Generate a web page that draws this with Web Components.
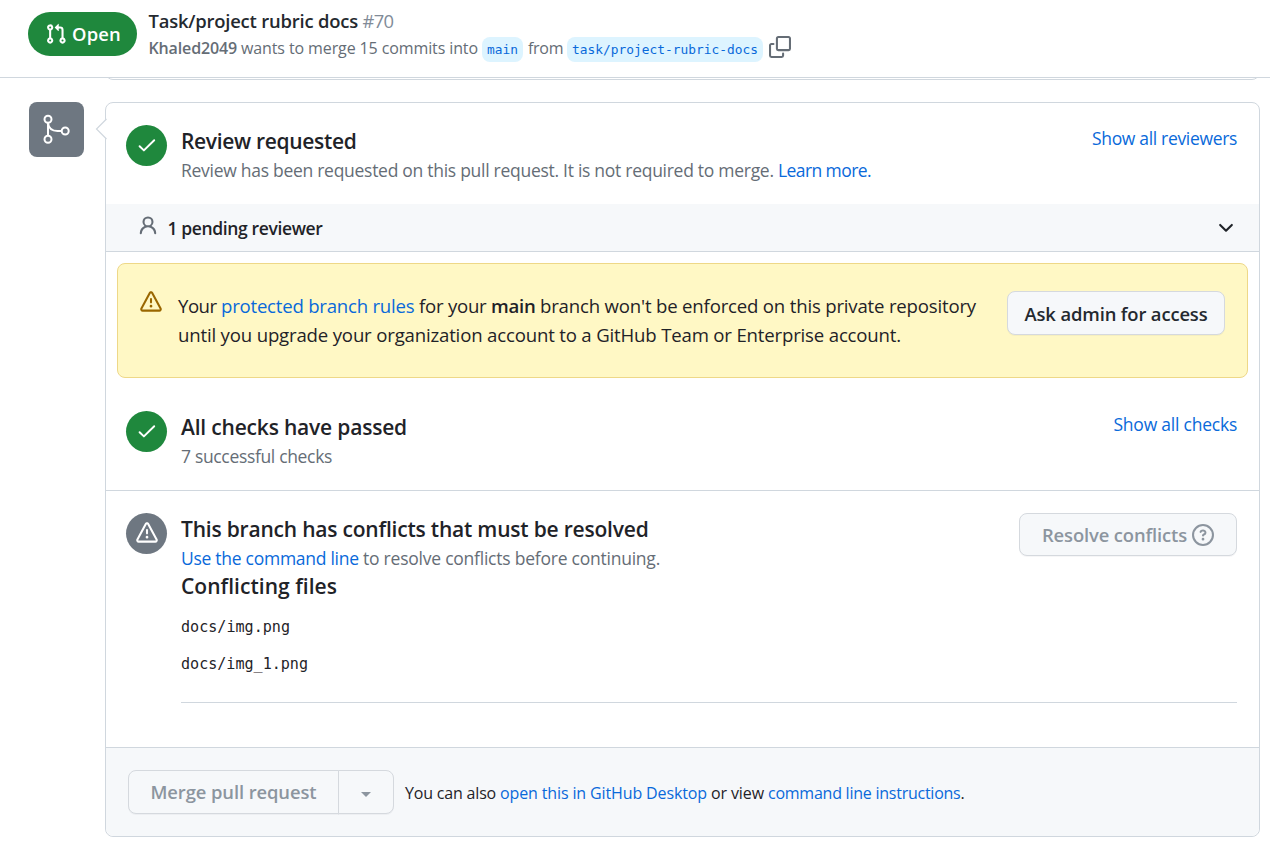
<!DOCTYPE html>
<html lang="en">
<head>
<meta charset="utf-8">
<title>Task/project rubric docs #70</title>
<style>
  body { margin: 0; background: #fff; color: #1f2328; font-family: "Open Sans", "Noto Sans", sans-serif; }
</style>
</head>
<body>
<pr-page></pr-page>
<script>
const ICONS = {
  pr: ['0 0 16 16', '<path d="M1.5 3.25a2.25 2.25 0 1 1 3 2.122v5.256a2.251 2.251 0 1 1-1.5 0V5.372A2.25 2.25 0 0 1 1.5 3.25Zm5.677-.177L9.573.677A.25.25 0 0 1 10 .854V2.5h1A2.5 2.5 0 0 1 13.5 5v5.628a2.251 2.251 0 1 1-1.5 0V5a1 1 0 0 0-1-1h-1v1.646a.25.25 0 0 1-.427.177L7.177 3.427a.25.25 0 0 1 0-.354ZM3.75 2.5a.75.75 0 1 0 0 1.5.75.75 0 0 0 0-1.5Zm0 9.5a.75.75 0 1 0 0 1.5.75.75 0 0 0 0-1.5Zm8.25.75a.75.75 0 1 0 1.5 0 .75.75 0 0 0-1.5 0Z"/>'],
  merge: ['0 0 55 55', '<g fill="none" stroke="currentColor" stroke-width="2"><circle cx="19" cy="17.3" r="3.5"/><circle cx="19" cy="37.3" r="3.5"/><circle cx="36.2" cy="29" r="3.5"/><path d="M19 21v12.6M19 21c.6 5 4 8 9.500 8h4"/></g>'],
  check: ['0 0 41 41', '<path d="M13.600 21.200l4.300 4.200L28.200 15.300" fill="none" stroke="currentColor" stroke-width="1.950" stroke-linecap="round" stroke-linejoin="round"/>'],
  alert: ['0 0 16 16', '<path d="M6.457 1.047c.659-1.234 2.427-1.234 3.086 0l6.082 11.378A1.75 1.75 0 0 1 14.082 15H1.918a1.75 1.75 0 0 1-1.543-2.575Zm1.763.707a.25.25 0 0 0-.44 0L1.698 13.132a.25.25 0 0 0 .22.368h12.164a.25.25 0 0 0 .22-.368Zm.53 3.996v2.5a.75.75 0 0 1-1.5 0v-2.5a.75.75 0 0 1 1.5 0ZM9 11a1 1 0 1 1-2 0 1 1 0 0 1 2 0Z"/>'],
  copy: ['0 0 16 16', '<path d="M0 6.75C0 5.784.784 5 1.75 5h1.5a.75.75 0 0 1 0 1.5h-1.5a.25.25 0 0 0-.25.25v7.5c0 .138.112.25.25.25h7.5a.25.25 0 0 0 .25-.25v-1.5a.75.75 0 0 1 1.5 0v1.5A1.75 1.75 0 0 1 9.25 16h-7.5A1.75 1.75 0 0 1 0 14.25Z"/><path d="M5 1.75C5 .784 5.784 0 6.75 0h7.5C15.216 0 16 .784 16 1.75v7.5A1.75 1.75 0 0 1 14.25 11h-7.5A1.75 1.75 0 0 1 5 9.25Zm1.75-.25a.25.25 0 0 0-.25.25v7.5c0 .138.112.25.25.25h7.5a.25.25 0 0 0 .25-.25v-7.5a.25.25 0 0 0-.25-.25Z"/>'],
  person: ['0 0 16 16', '<path d="M10.561 8.073a6.005 6.005 0 0 1 3.432 5.142.75.75 0 1 1-1.498.07 4.5 4.5 0 0 0-8.99 0 .75.75 0 0 1-1.498-.07 6.004 6.004 0 0 1 3.431-5.142 3.999 3.999 0 1 1 5.123 0ZM10.5 5a2.5 2.5 0 1 0-5 0 2.5 2.5 0 0 0 5 0Z"/>'],
  chevron: ['0 0 16 16', '<path d="M12.78 5.22a.749.749 0 0 1 0 1.06l-4.25 4.25a.749.749 0 0 1-1.06 0L3.22 6.28a.749.749 0 1 1 1.06-1.06L8 8.939l3.72-3.719a.749.749 0 0 1 1.06 0Z"/>'],
  question: ['0 0 16 16', '<path d="M0 8a8 8 0 1 1 16 0A8 8 0 0 1 0 8Zm8-6.5a6.5 6.5 0 1 0 0 13 6.5 6.5 0 0 0 0-13ZM6.92 6.085h.001a.749.749 0 1 1-1.342-.67c.169-.339.436-.701.849-.977C6.845 4.16 7.369 4 8 4a2.756 2.756 0 0 1 1.637.525c.503.377.863.965.863 1.725 0 .448-.115.83-.329 1.15-.205.307-.47.513-.692.662-.109.072-.22.138-.313.195l-.006.004a6.24 6.24 0 0 0-.26.16.952.952 0 0 0-.276.245.75.75 0 0 1-1.248-.832c.184-.264.42-.489.692-.661.103-.067.207-.132.313-.195l.007-.004c.1-.061.182-.11.258-.161a.969.969 0 0 0 .277-.245C8.96 6.514 9 6.427 9 6.25a.612.612 0 0 0-.262-.525A1.27 1.27 0 0 0 8 5.5c-.369 0-.595.09-.74.187a1.01 1.01 0 0 0-.34.398ZM9 11a1 1 0 1 1-2 0 1 1 0 0 1 2 0Z"/>'],
  caret: ['0 0 10 5', '<path d="M0 0h10L5 5Z"/>'],
  notch: ['0 0 12 22', '<path d="M11.500 1L1.500 11l10 10" fill="#fff" stroke="#d0d7de" stroke-width="1.200"/>']
};

class UiBase extends HTMLElement {
  render(html) {
    if (!this.shadowRoot) this.attachShadow({ mode: 'open' });
    this.shadowRoot.innerHTML = html;
  }
}

/* <ui-icon name w h> */
customElements.define('ui-icon', class extends UiBase {
  connectedCallback() {
    const [box, body] = ICONS[this.getAttribute('name')];
    const w = this.getAttribute('w') || 22, h = this.getAttribute('h') || w;
    this.render(`<style>:host{display:block;flex:none;width:${w}px;height:${h}px}svg{display:block}</style>
      <svg width="${w}" height="${h}" viewBox="${box}" fill="currentColor" aria-hidden="true">${body}</svg>`);
  }
});

/* <text-run w="120">: a run of text tracked to a fixed measure */
customElements.define('text-run', class extends UiBase {
  connectedCallback() {
    const kind = this.getAttribute('kind') || '';
    const look = { link: 'color:#0969da;', strong: 'font-weight:600;', muted: 'color:#818b98;font-weight:400;' }[kind] || '';
    this.render(`<style>:host{display:inline-block;white-space:pre;flex:none;${look}}span{display:inline-block;white-space:pre}</style><span><slot></slot></span>`);
    const span = this.shadowRoot.querySelector('span');
    const want = parseFloat(this.getAttribute('w'));
    if (!want) return;
    const natural = span.getBoundingClientRect().width;
    span.style.letterSpacing = ((want - natural) / this.textContent.length).toFixed(4) + 'px';
    this.style.width = want + 'px';
  }
});

/* <branch-chip> */
customElements.define('branch-chip', class extends UiBase {
  connectedCallback() {
    this.render(`<style>:host{display:block;flex:none;box-sizing:border-box;height:25px;margin-top:3px;padding:0 5px;border-radius:8px;background:#ddf4ff;color:#0969da;font:12.85px/25px "DejaVu Sans Mono",monospace}</style><slot></slot>`);
  }
});

/* <ui-button> */
customElements.define('ui-button', class extends UiBase {
  connectedCallback() {
    this.render(`<style>
      :host{display:flex;flex:none;box-sizing:border-box;align-items:center;justify-content:center;border:1px solid #d5d9de;border-radius:8px;background:#f6f8fa;color:#24292f;font-size:18.4px;font-weight:600;box-shadow:0 1px 0 rgba(31,35,40,.04)}
      :host([disabled]){color:#8c959f}
      </style><slot></slot>`);
  }
});

/* <state-pill> */
customElements.define('state-pill', class extends UiBase {
  connectedCallback() {
    this.render(`<style>:host{display:flex;flex:none;box-sizing:border-box;width:109px;height:44px;padding-left:17px;align-items:center;gap:5px;border-radius:22px;background:#1f883d;color:#fff;font-size:18.4px;font-weight:600}text-run{margin-bottom:1px}</style>
      <ui-icon name="pr"></ui-icon><slot></slot>`);
  }
});

/* <pr-header> */
customElements.define('pr-header', class extends UiBase {
  connectedCallback() {
    this.render(`<style>
      :host{display:flex;box-sizing:border-box;height:78px;padding-left:28px;gap:11.500px;border-bottom:1px solid #d0d7de;background:#fff}
      state-pill{margin-top:12px}
      .title{display:flex;height:26px;margin-top:8px;font-size:18.4px;line-height:26px;font-weight:600;color:#24292f}
      .sub{display:flex;height:28px;font-size:16px;line-height:28px;color:#656d76}
      .sub ui-icon{margin:2px 0 0 6px}
      branch-chip + text-run{margin-left:5px}
    </style>
    <state-pill><text-run w="49" style="position:relative;top:-.500px">Open</text-run></state-pill>
    <div>
      <div class="title"><text-run w="214">Task/project rubric docs </text-run><text-run w="31" kind="muted">#70</text-run></div>
      <div class="sub"><text-run w="92.5">Khaled2049 </text-run><text-run w="241">wants to merge 15 commits into </text-run><branch-chip><text-run w="31">main</text-run></branch-chip><text-run w="39">from </text-run><branch-chip><text-run w="186">task/project-rubric-docs</text-run></branch-chip><ui-icon name="copy"></ui-icon></div>
    </div>`.replace('w="92.5"', 'w="92.5" kind="strong"'));
  }
});

/* <status-row tone icon>: round badge, heading, body and an action slot */
customElements.define('status-row', class extends UiBase {
  connectedCallback() {
    const warn = this.getAttribute('tone') === 'neutral';
    this.render(`<style>
      :host{display:flex;box-sizing:border-box;padding:22px 22px 0 20px;gap:14px;align-items:flex-start}
      .badge{display:flex;flex:none;width:41px;height:41px;border-radius:50%;align-items:center;justify-content:center;color:#fff;background:${warn ? '#6e7781' : '#1f883d'}}
      .badge ui-icon{margin-bottom:${warn ? 2 : 0}px}
      .main{flex:1;min-width:0}
      .top{display:flex;justify-content:space-between;align-items:flex-start;height:59px}
      .head{height:32px;font-size:21px;line-height:32px;font-weight:600}
      .sub{height:27px;font-size:17.5px;line-height:26px;color:#656d76;white-space:nowrap}
      .side{font-size:17.5px;line-height:26px}
    </style>
    <div class="badge">${warn ? '<ui-icon name="alert"></ui-icon>' : '<ui-icon name="check" w="41"></ui-icon>'}</div>
    <div class="main">
      <div class="top"><div><div class="head"><slot name="head"></slot></div><div class="sub"><slot name="sub"></slot></div></div><div class="side"><slot name="side"></slot></div></div>
      <slot></slot>
    </div>`);
  }
});

/* <reviewer-bar> */
customElements.define('reviewer-bar', class extends UiBase {
  connectedCallback() {
    this.render(`<style>
      :host{display:flex;box-sizing:border-box;height:48px;padding:0 22px 0 31px;border-bottom:1px solid #d0d7de;background:#f6f8fa;font-size:17.5px;font-weight:600;line-height:48px}
      .p{margin-top:10.500px;color:#656d76}.c{margin:12.500px 0 0 auto}
      text-run{margin-left:8.500px}
    </style><ui-icon class="p" name="person"></ui-icon><text-run w="155">1 pending reviewer</text-run><ui-icon class="c" name="chevron"></ui-icon>`);
  }
});

/* <warning-flash> */
customElements.define('warning-flash', class extends UiBase {
  connectedCallback() {
    this.render(`<style>
      :host{display:flex;box-sizing:border-box;height:115px;margin:11px 11px 0;padding:27px 22px 0;border:1px solid #eed888;border-radius:8px;background:#fff8c5;font-size:18.6px;line-height:29px}
      ui-icon{color:#9a6700;margin-right:16px}
      .line{white-space:nowrap;height:29px}
      ui-button{width:218px;height:44px;margin-left:auto;line-height:44px}
    </style>
    <ui-icon name="alert"></ui-icon>
    <div><div class="line"><text-run w="43">Your </text-run><text-run w="198" kind="link">protected branch rules </text-run><text-run w="72">for your </text-run><text-run w="49" kind="strong">main </text-run><text-run w="436">branch won't be enforced on this private repository</text-run></div>
    <div class="line"><text-run w="723">until you upgrade your organization account to a GitHub Team or Enterprise account.</text-run></div></div>
    <ui-button><text-run w="183" style="margin-top:2px">Ask admin for access</text-run></ui-button>`);
  }
});

/* <conflict-files> */
customElements.define('conflict-files', class extends UiBase {
  connectedCallback() {
    this.render(`<style>
      :host{display:block;border-bottom:1px solid #d0d7de;height:130px}
      .h{height:28px;font-size:21px;line-height:28px;font-weight:600;margin-bottom:9px}
      .f{height:37px;font:15.1px/37px "DejaVu Sans Mono",monospace}
    </style>
    <div class="h"><text-run w="156">Conflicting files</text-run></div>
    <div class="f"><text-run w="109">docs/img.png</text-run></div>
    <div class="f"><text-run w="127">docs/img_1.png</text-run></div>`);
  }
});

/* <merge-footer> */
customElements.define('merge-footer', class extends UiBase {
  connectedCallback() {
    this.render(`<style>
      :host{display:flex;box-sizing:border-box;height:89px;padding:22px 22px 0;border-top:1px solid #d0d7de;border-radius:0 0 8px 8px;background:#f6f8fa;font-size:16px}
      .a{width:211px;height:44px;border-radius:8px 0 0 8px}
      .a text-run{margin-bottom:2px}
      .b{width:56px;height:44px;margin-left:-1px;border-radius:0 8px 8px 0}
      .b ui-icon{margin-top:5px}
      .t{margin-left:11px;line-height:46px;white-space:nowrap}
    </style>
    <ui-button class="a" disabled><text-run w="166">Merge pull request</text-run></ui-button><ui-button class="b" disabled><ui-icon name="caret" w="10" h="5"></ui-icon></ui-button>
    <div class="t"><text-run w="95">You can also </text-run><text-run w="211" kind="link">open this in GitHub Desktop </text-run><text-run w="57">or view </text-run><text-run w="192.5" kind="link">command line instructions</text-run><text-run>.</text-run></div>`);
  }
});

/* <merge-card> */
customElements.define('merge-card', class extends UiBase {
  connectedCallback() {
    this.render(`<style>
      :host{display:block;position:relative;box-sizing:border-box;width:1155px;height:735px;border:1px solid #d0d7de;border-radius:8px;background:#fff}
      .notch{position:absolute;left:-11.500px;top:14.500px}
      .review{height:101px}.checks{height:113px;padding-top:33px;border-bottom:1px solid #d0d7de}.conflicts{height:256px}
      .conflicts ui-button{width:218px;height:43px;gap:5px;line-height:41px;font-size:18.4px}
    </style>
    <ui-icon class="notch" name="notch" w="12" h="22"></ui-icon>
    <status-row class="review">
      <text-run slot="head" w="175.5">Review requested</text-run>
      <text-run slot="sub" w="597">Review has been requested on this pull request. It is not required to merge. </text-run><text-run slot="sub" w="93" kind="link">Learn more.</text-run>
      <text-run slot="side" w="145" kind="link">Show all reviewers</text-run>
    </status-row>
    <reviewer-bar></reviewer-bar>
    <warning-flash></warning-flash>
    <status-row class="checks">
      <text-run slot="head" w="226">All checks have passed</text-run>
      <text-run slot="sub" w="151">7 successful checks</text-run>
      <text-run slot="side" w="123.5" kind="link">Show all checks</text-run>
    </status-row>
    <status-row class="conflicts" tone="neutral">
      <text-run slot="head" w="467.5">This branch has conflicts that must be resolved</text-run>
      <text-run slot="sub" w="182" kind="link">Use the command line </text-run><text-run slot="sub" w="297">to resolve conflicts before continuing.</text-run>
      <ui-button slot="side" disabled><text-run w="145">Resolve conflicts</text-run><ui-icon name="question"></ui-icon></ui-button>
      <conflict-files></conflict-files>
    </status-row>
    <merge-footer></merge-footer>`);
  }
});

/* <pr-page> */
customElements.define('pr-page', class extends UiBase {
  connectedCallback() {
    this.render(`<style>
      :host{display:block;height:848px;overflow:hidden}
      .prev{height:2px;margin:0 10px 0 105px;overflow:hidden;display:flex;align-items:flex-end}
      .prev div{flex:1;flex-shrink:0;height:20px;box-sizing:border-box;border:1px solid #d0d7de;border-radius:8px}
      .row{display:flex;gap:21px;padding:22px 0 0 29px;align-items:flex-start}
      .av{display:block;width:55px;height:55px;border-radius:8px;background:#6e7781;color:#fff}
    </style>
    <pr-header></pr-header>
    <div class="prev"><div></div></div>
    <div class="row"><ui-icon class="av" name="merge" w="55"></ui-icon><merge-card></merge-card></div>`);
  }
});
</script>
</body>
</html>
